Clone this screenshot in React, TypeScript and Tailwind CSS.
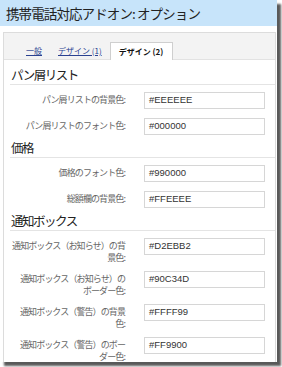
import React from 'react';

const jp = "font-['Noto_Sans_CJK_JP',sans-serif]";

type Row = { label: string[]; value: string };
type Section = { title: string; rows: Row[] };

const sections: Section[] = [
  {
    title: 'パン屑リスト',
    rows: [
      { label: ['パン屑リストの背景色:'], value: '#EEEEEE' },
      { label: ['パン屑リストのフォント色:'], value: '#000000' },
    ],
  },
  {
    title: '価格',
    rows: [
      { label: ['価格のフォント色:'], value: '#990000' },
      { label: ['総額欄の背景色:'], value: '#FFEEEE' },
    ],
  },
  {
    title: '通知ボックス',
    rows: [
      { label: ['通知ボックス（お知らせ）の背', '景色:'], value: '#D2EBB2' },
      { label: ['通知ボックス（お知らせ）の', 'ボーダー色:'], value: '#90C34D' },
      { label: ['通知ボックス（警告）の背景', '色:'], value: '#FFFF99' },
      { label: ['通知ボックス（警告）のボー', 'ダー色:'], value: '#FF9900' },
    ],
  },
];

function OptionRow({ row }: { row: Row }) {
  const multi = row.label.length > 1;
  return (
    <div className={`flex shrink-0 items-start pt-[3px] ${multi ? 'h-[33px]' : 'h-[26px]'}`}>
      <div className="w-[115px] pt-[2px] text-right text-[9px] leading-[12px] tracking-[-0.9px] text-[#666] whitespace-nowrap">
        {row.label.map((l, i) => (
          <div key={i} className="h-[12px]">
            {l}
          </div>
        ))}
      </div>
      <div className="ml-[19px] flex h-[17px] w-[121px] items-center border border-[#d6d6d6] bg-white pl-[4px] font-['Liberation_Sans',sans-serif] text-[9.5px] text-[#333]">
        {row.value}
      </div>
    </div>
  );
}

export default function App() {
  return (
    <div className={`h-[367px] w-[282px] overflow-hidden bg-white ${jp}`}>
      <div className="flex h-[362px] w-[277px] flex-col overflow-hidden bg-white shadow-[4px_4px_2px_rgba(0,0,0,0.65)]">
        <div className="flex h-[26px] shrink-0 items-center bg-[#c7e4fa] pl-[6px] text-[13.5px] tracking-[-0.9px] text-[#222]">
          携帯電話対応アドオン: オプション
        </div>

        <div className="ml-[3px] mr-[1px] mt-[6px] flex flex-1 flex-col border-l border-r border-t border-[#dcdcdc] bg-white">
          {/* tabs */}
          <div className="flex h-[27px] shrink-0 items-end border-b border-[#e2e2e2] bg-[#f3f3f3] pl-[14px]">
            <a className="flex h-[17px] items-center px-[8px] text-[8px] text-[#2a4190] underline">一般</a>
            <a className="flex h-[17px] items-center px-[8px] text-[8px] text-[#2a4190] underline">デザイン (1)</a>
            <span className="-mb-px flex h-[18px] items-center border border-b-0 border-[#cfcfcf] bg-white pl-[8px] pr-[9px] text-[8px] font-bold text-[#111]">
              デザイン (2)
            </span>
          </div>

          <div className="flex flex-col pl-[6px] pt-[8px]">
            {sections.map((s) => (
              <div key={s.title} className="flex shrink-0 flex-col">
                <div className="border-b border-[#e4e4e4] pb-[2px] pl-[1px] text-[12.5px] leading-[14px] tracking-[-1.5px] text-[#222]">
                  {s.title}
                </div>
                <div className="flex flex-col pt-[4px]">
                  {s.rows.map((r) => (
                    <OptionRow key={r.value} row={r} />
                  ))}
                </div>
              </div>
            ))}
          </div>
        </div>
      </div>
    </div>
  );
}
